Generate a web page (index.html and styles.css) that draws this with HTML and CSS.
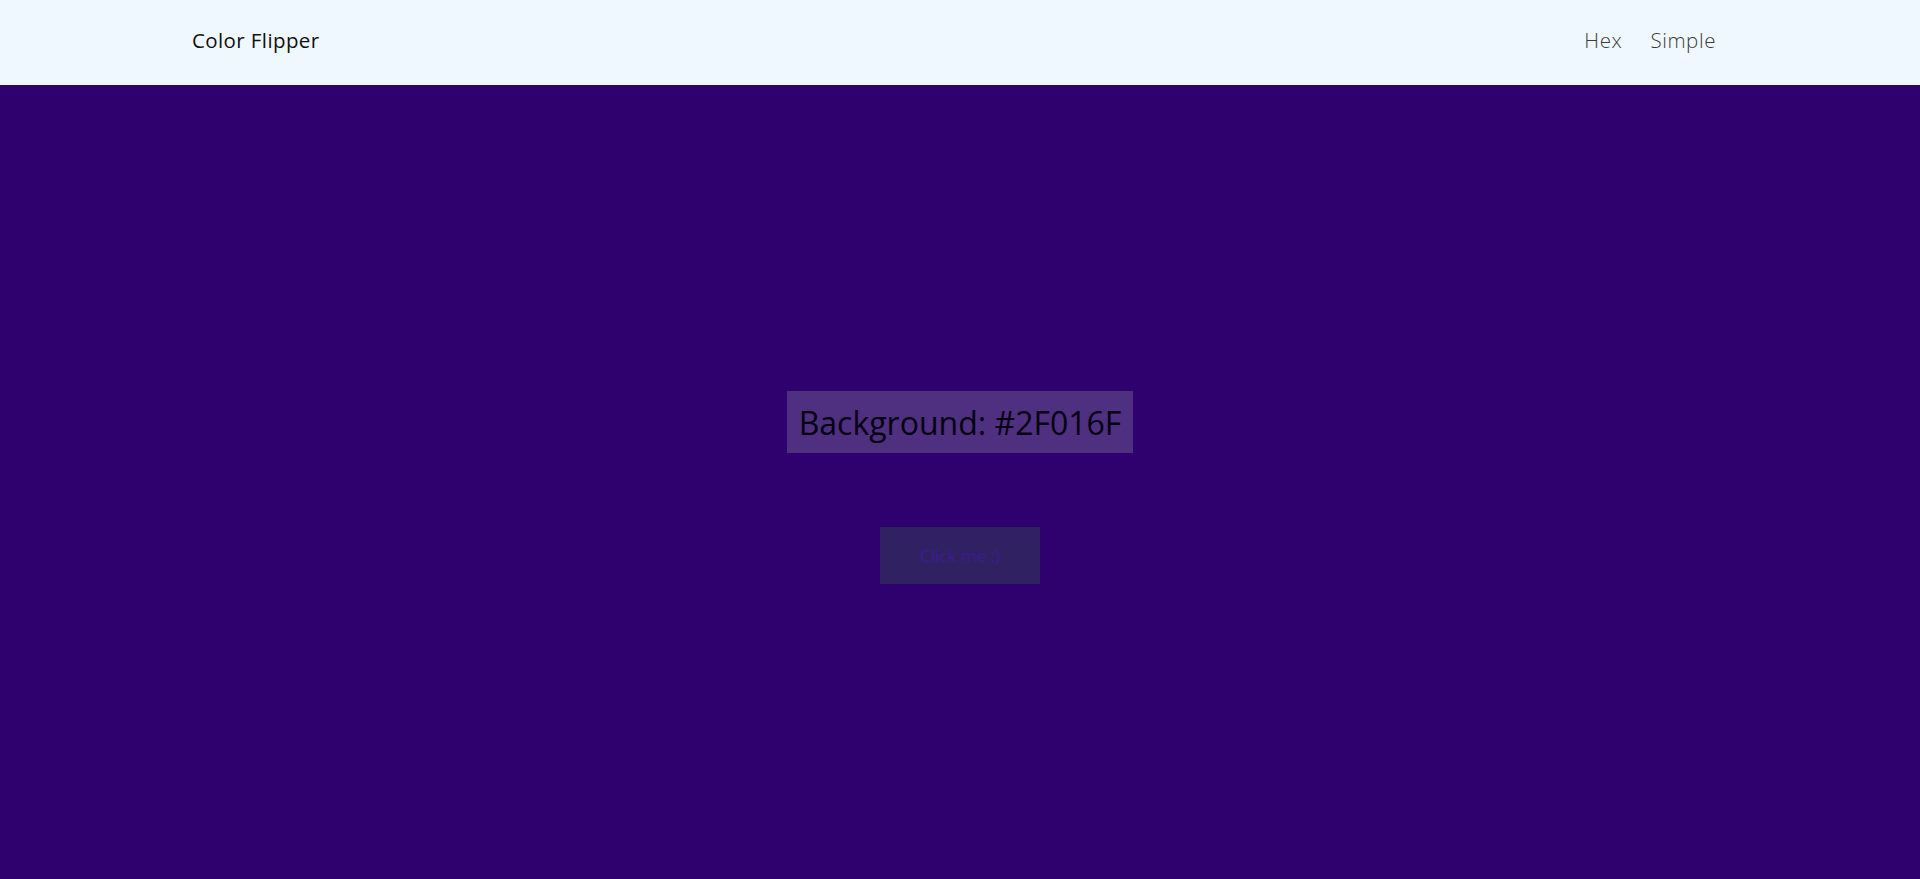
FILE: index.html
```html
<!DOCTYPE html>
<html lang="en">
<head>
<meta charset="utf-8">
<title>Color Flipper</title>
<link rel="stylesheet" href="styles.css">
</head>
<body>
<nav class="nav">
  <div class="brand">Color Flipper</div>
  <ul class="links">
    <li><a href="#">Hex</a></li>
    <li><a href="#">Simple</a></li>
  </ul>
</nav>
<main class="main">
  <h2 class="label">Background: <span>#2F016F</span></h2>
  <button class="btn">Click me :)</button>
</main>
</body>
</html>
```
FILE: styles.css
```css
* { box-sizing: border-box; margin: 0; padding: 0; }
html, body { height: 100%; }
body {
  font-family: "Open Sans", "Liberation Sans", sans-serif;
  background: #2F016F;
  display: flex;
  flex-direction: column;
}
.nav {
  height: 85px;
  flex: none;
  background: #f0f8ff;
  display: flex;
  align-items: center;
  justify-content: space-between;
  padding: 0 204px 5px 192px;
}
.brand {
  font-size: 20.5px;
  color: #111;
  letter-spacing: 0.4px;
}
.links {
  list-style: none;
  display: flex;
  gap: 28px;
}
.links a {
  text-decoration: none;
  color: #3a3a3a;
  font-size: 20.5px;
  font-weight: 300;
  letter-spacing: 0.6px;
}
.main {
  flex: 1;
  display: flex;
  flex-direction: column;
  align-items: center;
  justify-content: center;
  gap: 74px;
  padding-top: 11px;
}
.label {
  height: 62px;
  display: flex;
  align-items: center;
  padding: 0 12px;
  background: #4e2f80;
  color: #050010;
  font-size: 32px;
  font-weight: 400;
  white-space: pre;
}
.btn {
  width: 160px;
  height: 57px;
  border: none;
  background: #302262;
  color: #3d1b92;
  font-family: inherit;
  font-size: 17px;
  font-weight: 400;
  cursor: pointer;
}
```
